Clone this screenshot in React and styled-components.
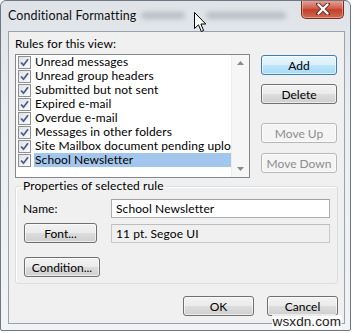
import React from 'react'
import styled, { createGlobalStyle } from 'styled-components'

const GlobalStyle = createGlobalStyle`
  html, body {
    margin: 0;
    padding: 0;
    background: #ffffff;
  }
  body {
    font-family: Lato, "Liberation Sans", sans-serif;
    font-size: 12px;
    letter-spacing: 0.1px;
    color: #000;
  }
`

const Window = styled.div`
  position: relative;
  box-sizing: border-box;
  width: 351px;
  height: 331px;
  border: 1px solid #6e7884;
  border-radius: 6px 6px 2px 2px;
  background: linear-gradient(#dfe3e8, #eceff2 40%, #f1f3f5);
  display: flex;
  flex-direction: column;
  overflow: hidden;
`

const TitleBar = styled.div`
  position: relative;
  height: 30px;
  display: flex;
  align-items: center;
  padding: 0 0 2px 7px;
  box-sizing: border-box;
`

const Title = styled.span`
  font-size: 12.5px;
  color: #111;
`

const Blur = styled.span`
  position: absolute;
  top: 11px;
  left: ${p => p.left}px;
  width: ${p => p.width}px;
  height: 7px;
  border-radius: 4px;
  background: #b9bec4;
  filter: blur(2.5px);
`

const CloseButton = styled.div`
  position: absolute;
  top: -1px;
  right: 6px;
  width: 43px;
  height: 19px;
  box-sizing: border-box;
  border: 1px solid #7a2c24;
  border-top: none;
  border-radius: 0 0 5px 5px;
  background: linear-gradient(#e9a99c, #d1604c 45%, #c0402c 55%, #d36a4f);
  box-shadow: inset 0 0 0 1px rgba(255, 255, 255, 0.35);
  display: flex;
  align-items: center;
  justify-content: center;
`

const Cursor = styled.svg`
  position: absolute;
  left: 193px;
  top: 11px;
`

const Client = styled.div`
  flex: 1;
  margin: 0 5px 6px 7px;
  border: 1px solid #9aa3ad;
  background: #f0f0f0;
  padding: 0 6px;
  display: flex;
  flex-direction: column;
`

const TopSection = styled.div`
  display: flex;
  align-items: flex-start;
`

const LeftCol = styled.div`
  width: 235px;
  display: flex;
  flex-direction: column;
`

const Label = styled.div`
  margin-top: 4px;
  line-height: 16px;
`

const ListBox = styled.div`
  margin-top: 2px;
  box-sizing: border-box;
  height: 124px;
  border: 1px solid #828790;
  background: #fff;
  display: flex;
`

const Items = styled.div`
  flex: 1;
  min-width: 0;
  padding-left: 1px;
`

const Item = styled.div`
  height: 14px;
  display: flex;
  align-items: center;
`

const Check = styled.span`
  flex: none;
  width: 13px;
  height: 13px;
  margin-left: 1px;
  box-sizing: border-box;
  border: 1px solid #8e8f8f;
  background: linear-gradient(135deg, #dfe2e6, #fbfbfb);
  display: flex;
  align-items: center;
  justify-content: center;
`

const ItemText = styled.span`
  flex: 1;
  min-width: 0;
  margin-left: 3px;
  padding-left: 1px;
  height: 14px;
  line-height: 14px;
  white-space: nowrap;
  overflow: hidden;
  background: ${p => (p.selected ? '#a3c7ec' : 'transparent')};
`

const ScrollBar = styled.div`
  flex: none;
  width: 17px;
  background: #f6f6f6;
  border-left: 1px solid #ececec;
  display: flex;
  flex-direction: column;
  justify-content: space-between;
  align-items: center;
  padding: 6px 0;
`

const RightCol = styled.div`
  margin-left: 11px;
  padding-top: 23px;
  display: flex;
  flex-direction: column;
`

const Button = styled.button`
  box-sizing: border-box;
  width: ${p => p.w || 76}px;
  height: 20px;
  margin: ${p => p.m || '0'};
  padding: 0;
  font: inherit;
  font-size: 12px;
  color: ${p => (p.disabled ? '#8d8d8d' : '#000')};
  border: 1px solid ${p => (p.primary ? '#3c7fb1' : p.disabled ? '#b5b8ba' : '#707070')};
  border-radius: 3px;
  background: ${p =>
    p.primary
      ? 'linear-gradient(#eaf6fd, #d9f0fc 50%, #bee6fd 51%, #a7d9f5)'
      : p.disabled
      ? '#f4f4f4'
      : 'linear-gradient(#f2f2f2, #ebebeb 50%, #dddddd 51%, #cfcfcf)'};
  box-shadow: inset 0 0 0 1px rgba(255, 255, 255, 0.6);
`

const Group = styled.fieldset`
  margin: 0;
  padding: 5px 7px 6px 7px;
  border: 1px solid #d5dfe5;
  border-radius: 3px;
  box-shadow: inset 1px 1px 0 #fff;
`

const Legend = styled.legend`
  padding: 0 2px;
  margin-left: -2px;
  line-height: 16px;
`

const Row = styled.div`
  display: flex;
  align-items: center;
  margin-top: ${p => p.mt || 0}px;
`

const FieldLabel = styled.span`
  width: 88px;
`

const Field = styled.div`
  box-sizing: border-box;
  width: 219px;
  height: 19px;
  margin-left: ${p => p.ml || 0}px;
  padding-left: 4px;
  line-height: 17px;
  border: 1px solid ${p => (p.readOnly ? '#c9c9c9' : '#abadb3')};
  border-top-color: ${p => (p.readOnly ? '#bdbdbd' : '#9ca3ab')};
  background: ${p => (p.readOnly ? '#f0f0f0' : '#fff')};
`

const Footer = styled.div`
  display: flex;
  justify-content: flex-end;
  gap: 13px;
  margin-top: 12px;
`

const Watermark = styled.div`
  position: absolute;
  right: 8px;
  bottom: 1px;
  padding: 0 1px;
  font-family: "Liberation Sans", sans-serif;
  font-size: 13.5px;
  line-height: 14px;
  color: #1c1c1c;
  background: rgba(255, 255, 255, 0.85);
`

const rules = [
  'Unread messages',
  'Unread group headers',
  'Submitted but not sent',
  'Expired e-mail',
  'Overdue e-mail',
  'Messages in other folders',
  'Site Mailbox document pending upload',
  'School Newsletter',
]

function CheckMark() {
  return (
    <svg width="9" height="9" viewBox="0 0 9 9">
      <path d="M1 4.5 L3.5 7.2 L8 1.2" fill="none" stroke="#4a5f8f" strokeWidth="1.8" />
    </svg>
  )
}

function Arrow({ down }) {
  return (
    <svg width="7" height="4" viewBox="0 0 7 4">
      <path d={down ? 'M0 0 H7 L3.5 4 Z' : 'M0 4 H7 L3.5 0 Z'} fill="#8a8a8a" />
    </svg>
  )
}

export default function App() {
  return (
    <React.Fragment>
      <GlobalStyle />
      <Window>
        <TitleBar>
          <Title>Conditional Formatting</Title>
          <Blur left={140} width={44} />
          <Blur left={205} width={80} />
          <CloseButton>
            <svg width="14" height="12" viewBox="0 0 14 12">
              <path d="M2 1 L12 11 M12 1 L2 11" stroke="#6b2a22" strokeWidth="4" strokeLinecap="round" />
              <path d="M2.5 1.5 L11.5 10.5 M11.5 1.5 L2.5 10.5" stroke="#fff" strokeWidth="2.4" strokeLinecap="round" />
            </svg>
          </CloseButton>
          <Cursor width="13" height="21" viewBox="0 0 13 21">
            <path d="M0.5 0.5 V16.5 L4.5 12.8 L7.3 19.5 L9.6 18.5 L6.9 12 H11.8 Z" fill="#fff" stroke="#000" strokeWidth="1" />
          </Cursor>
        </TitleBar>
        <Client>
          <TopSection>
            <LeftCol>
              <Label>Rules for this view:</Label>
              <ListBox>
                <Items>
                  {rules.map((r, i) => (
                    <Item key={r}>
                      <Check><CheckMark /></Check>
                      <ItemText selected={i === rules.length - 1}>{r}</ItemText>
                    </Item>
                  ))}
                </Items>
                <ScrollBar>
                  <Arrow />
                  <Arrow down />
                </ScrollBar>
              </ListBox>
            </LeftCol>
            <RightCol>
              <Button primary>Add</Button>
              <Button m="9px 0 0">Delete</Button>
              <Button m="19px 0 0" disabled>Move Up</Button>
              <Button m="10px 0 0" disabled>Move Down</Button>
            </RightCol>
          </TopSection>
          <Group>
            <Legend>Properties of selected rule</Legend>
            <Row>
              <FieldLabel>Name:</FieldLabel>
              <Field>School Newsletter</Field>
            </Row>
            <Row mt={5}>
              <Button w={73} m="0 0 0 1px">Font...</Button>
              <Field readOnly ml={14}>11 pt. Segoe UI</Field>
            </Row>
            <Row mt={14}>
              <Button m="0 0 0 1px">Condition...</Button>
            </Row>
          </Group>
          <Footer>
            <Button w={71}>OK</Button>
            <Button w={71}>Cancel</Button>
          </Footer>
        </Client>
        <Watermark>wsxdn.com</Watermark>
      </Window>
    </React.Fragment>
  )
}
